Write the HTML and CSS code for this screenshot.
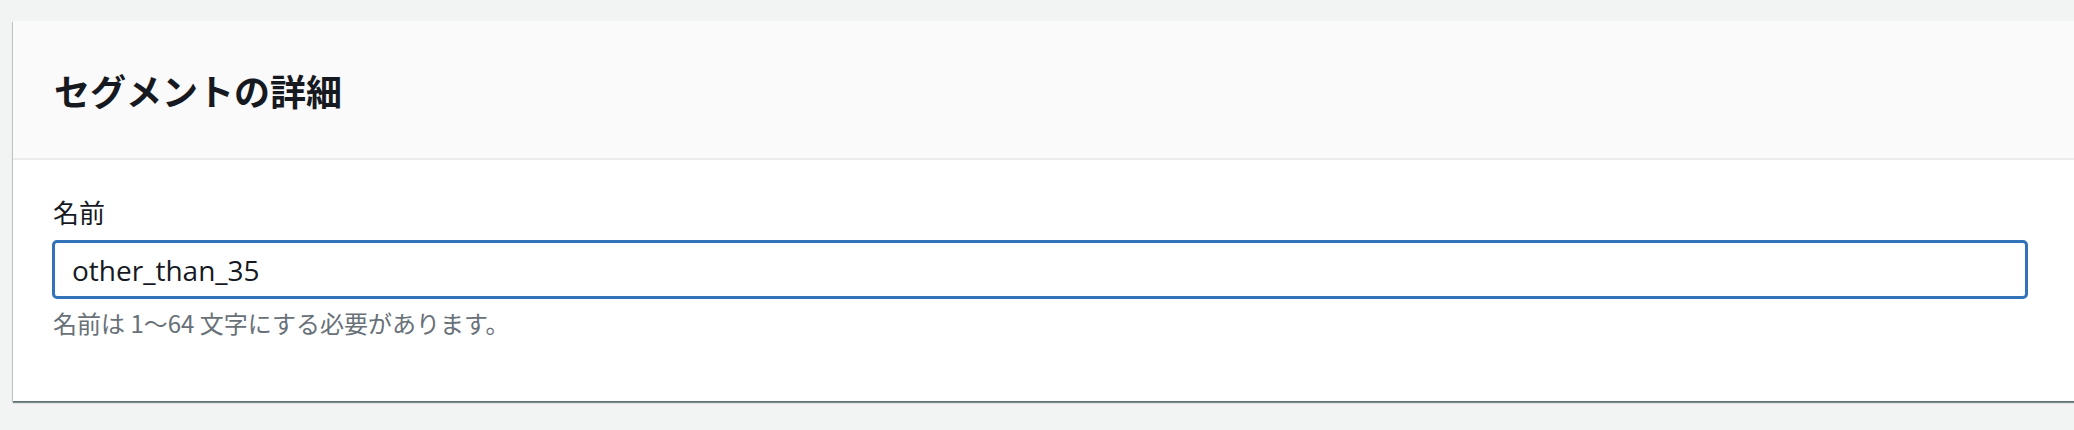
FILE: index.html
```html
<!DOCTYPE html>
<html lang="ja">
<head>
<meta charset="utf-8">
<title>セグメントの詳細</title>
<link rel="stylesheet" href="styles.css">
</head>
<body>
<div class="page">
  <section class="card">
    <header class="card-header">
      <h2 class="card-title">セグメントの詳細</h2>
    </header>
    <div class="card-body">
      <label class="field-label" for="segment-name">名前</label>
      <div class="input-wrap">
        <input class="text-input" id="segment-name" type="text" value="other_than_35">
      </div>
      <p class="field-hint">名前は 1〜64 文字にする必要があります。</p>
    </div>
  </section>
</div>
</body>
</html>
```

FILE: styles.css
```css
html, body {
  margin: 0;
  padding: 0;
  background: #f2f3f3;
  overflow: hidden;
}

body {
  font-family: "Open Sans", "Noto Sans CJK JP", sans-serif;
  color: #16191f;
}

.page {
  display: flex;
  padding: 21px 0 0 13px;
  height: 430px;
  box-sizing: border-box;
}

.card {
  flex: 1;
  margin-right: -40px;
  align-self: flex-start;
  background: #ffffff;
  box-shadow: 0 2px 1px 0 rgba(0, 28, 36, 0.45), 1px 1px 1px 0 rgba(0, 28, 36, 0.15), -1px 1px 1px 0 rgba(0, 28, 36, 0.15);
}

.card-header {
  background: #fafafa;
  border-bottom: 2px solid #eaeded;
  height: 137px;
  display: flex;
  align-items: center;
  padding: 0 41px;
}

.card-title {
  margin: 0;
  font-family: "Noto Sans CJK JP", sans-serif;
  font-size: 36px;
  font-weight: 700;
  line-height: 48px;
  color: #16191f;
}

.card-body {
  display: flex;
  flex-direction: column;
  padding: 34px 86px 0 39px;
  height: 241px;
  box-sizing: border-box;
}

.field-label {
  font-family: "Noto Sans CJK JP", sans-serif;
  font-size: 26px;
  line-height: 36px;
  color: #16191f;
  padding-left: 1px;
}

.input-wrap {
  margin-top: 10px;
}

.text-input {
  display: block;
  width: 100%;
  box-sizing: border-box;
  height: 59px;
  margin: 0;
  padding: 0 17px;
  border: 3px solid #3172b9;
  border-radius: 5px;
  outline: none;
  background: #ffffff;
  font-family: "Open Sans", sans-serif;
  font-size: 28px;
  color: #16191f;
}

.field-hint {
  margin: 8px 0 0;
  font-family: "Noto Sans CJK JP", sans-serif;
  font-size: 24px;
  line-height: 32px;
  color: #687078;
  padding-left: 1px;
}
```
